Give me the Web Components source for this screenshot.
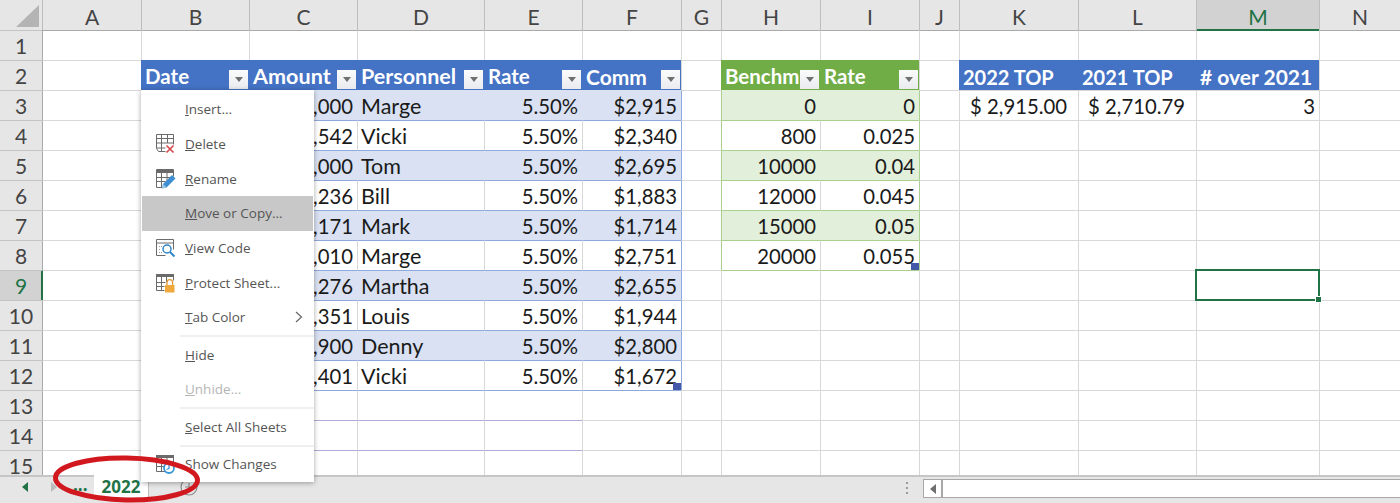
<!DOCTYPE html>
<html lang="en">
<head>
<meta charset="utf-8">
<title>2022</title>
<style>
  html, body { margin: 0; padding: 0; background: #fff; }
  xl-workbook { font-family: Lato, "Liberation Sans", sans-serif; }
  svg { display: block; }
</style>
</head>
<body>
<xl-workbook>
  <xl-sheet></xl-sheet>
  <xl-context-menu>
    <xl-menu-item><u>I</u>nsert...</xl-menu-item>
    <xl-menu-item>
      <svg slot="icon" width="22" height="22" viewBox="0 0 22 22" fill="none"><path d="M2.5 15.500V1.500h17v10M2.500 5.500h17M2.500 10h17M2.500 15h9M7.500 1.500v17M13.500 1.500v8.500M2.500 15.500l2 3h7" stroke="#6a6a6a"/><path d="M12.500 12.500l7 7M19.500 12.500l-7 7" stroke="#d9444a" stroke-width="1.600"/></svg>
      <u>D</u>elete
    </xl-menu-item>
    <xl-menu-item>
      <svg slot="icon" width="22" height="22" viewBox="0 0 22 22" fill="none"><path d="M2.500 19.500V1.500h17v7M2.500 19.500h6M2.500 9.500h15M2.500 13.500h9M7.500 5v14M13 5v8" stroke="#6a6a6a"/><path d="M2 2h18v3H2z" fill="#6a6a6a"/><path d="M8 20.500l1-4.500 9-9 3.500 3.500-9 9z" fill="#3d8fd1"/><path d="M8 20.500l1-4.500 3.500 3.500z" fill="#9cc9ea"/></svg>
      <u>R</u>ename
    </xl-menu-item>
    <xl-menu-item active><u>M</u>ove or Copy...</xl-menu-item>
    <xl-menu-item>
      <svg slot="icon" width="22" height="22" viewBox="0 0 22 22" fill="none"><path d="M2.500 18.500V2.500h17v10M2.500 18.500h9M2.500 6h17" stroke="#6a6a6a"/><path d="M5 9.500h3M5 12.500h2M5 15.500h3" stroke="#9a9a9a" stroke-dasharray="1 1"/><circle cx="13" cy="12" r="4" stroke="#2f86c9" stroke-width="1.500" fill="#fff"/><path d="M16 15l4.500 4.500" stroke="#2f86c9" stroke-width="2"/></svg>
      <u>V</u>iew Code
    </xl-menu-item>
    <xl-menu-item>
      <svg slot="icon" width="22" height="22" viewBox="0 0 22 22" fill="none"><path d="M2.500 18.500V2.500h17v6M2.500 18.500h8M2.500 10.500h9M2.500 14.500h8M7.500 5v13.500M12.500 5v5" stroke="#6a6a6a"/><path d="M2 2h18v3H2z" fill="#6a6a6a"/><path d="M13 13v-2.500a2.800 2.800 0 0 1 5.600 0V13" stroke="#e29a34" stroke-width="1.300"/><rect x="11" y="13" width="9.500" height="7.500" fill="#f0a93c"/></svg>
      <u>P</u>rotect Sheet...
    </xl-menu-item>
    <xl-menu-item more><u>T</u>ab Color</xl-menu-item>
    <xl-menu-sep></xl-menu-sep>
    <xl-menu-item><u>H</u>ide</xl-menu-item>
    <xl-menu-item disabled><u>U</u>nhide...</xl-menu-item>
    <xl-menu-sep></xl-menu-sep>
    <xl-menu-item><u>S</u>elect All Sheets</xl-menu-item>
    <xl-menu-sep></xl-menu-sep>
    <xl-menu-item>
      <svg slot="icon" width="22" height="22" viewBox="0 0 22 22" fill="none"><path d="M2.500 18.500V2.500h17v7M2.500 18.500h9M2.500 9h17M2.500 13.500h9M7.500 2.500v16M13 2.500v6.500" stroke="#6a6a6a"/><path d="M2 2h18v3H2z" fill="#6a6a6a"/><circle cx="15" cy="15" r="5" stroke="#3a97d6" stroke-width="1.800" fill="#fff"/><path d="M15 12v3.500l-2.500 1" stroke="#3a97d6" stroke-width="1.300"/></svg>
      Show Chan<u>g</u>es
    </xl-menu-item>
  </xl-context-menu>
  <xl-tab-bar></xl-tab-bar>
  <xl-callout></xl-callout>
</xl-workbook>

<script>
const COLS = ["A","B","C","D","E","F","G","H","I","J","K","L","M","N"];
const COL_WIDTHS = [99,108,108,127,98,99,40,99,99,40,119,118,123,81];
const SALES = [
  [",000","Marge","$2,915"],[",542","Vicki","$2,340"],[",000","Tom","$2,695"],
  [",236","Bill","$1,883"],[",171","Mark","$1,714"],[",010","Marge","$2,751"],
  [",276","Martha","$2,655"],[",351","Louis","$1,944"],[",900","Denny","$2,800"],
  [",401","Vicki","$1,672"]
];
const BENCH = [["0","0"],["800","0.025"],["10000","0.04"],["12000","0.045"],["15000","0.05"],["20000","0.055"]];
const BLUE_LINE = "#8ea9db";
const GREEN_LINE = "#a9d08e";
const PURPLE_LINE = "#b3a9d6";

const sheetTemplate = document.createElement("template");
sheetTemplate.innerHTML = `
  <style>
    :host { display: block; height: 475px; flex: none; background: #fff; color: #1a1a1a;
      font: 20.3px/1.3 Lato, "Liberation Sans", sans-serif; }
    .grid { display: grid; grid-template-columns: 42px ${COL_WIDTHS.map(w => w + "px").join(" ")};
      grid-auto-rows: 30px; }
    .c { box-sizing: border-box; border-left: 1px solid #d8d8d8; border-top: 1px solid #d8d8d8;
      display: flex; align-items: center; padding: 2px 4px 0 3px; white-space: nowrap; min-width: 0; position: relative; }
    .r { justify-content: flex-end; }
    .name { font-size: 21.5px; }
    .hd { background: #e6e6e6; justify-content: center; color: #444; padding: 0; font-size: 21px; line-height: 1; border-left-color: #bdbdbd; border-top-color: #c4c4c4; }
    .colhd { border-top: 0; padding-top: 2px; }
    .rowhd { border-left: 0; }
    .colhd.sel { box-shadow: inset 0 -1px #217346; }
    .rowhd.sel { box-shadow: inset -1px 0 #217346; }
    .sel { background: #d2d2d2; color: #217346; }
    .corner { padding: 0; border-left: 0; }
    .th { color: #fff; font-weight: 700; border-color: transparent; padding-right: 1px; justify-content: space-between; }
    .th span { min-width: 0; }
    .blue { background: #4472c4; }
    .green { background: #70ad47; }
    .fbtn { flex: none; width: 19px; height: 19px; align-self: flex-end; margin-bottom: 1px; box-sizing: border-box; position: relative;
      background: linear-gradient(#fbfbfb, #e9ebee); display: flex; align-items: center; justify-content: center; }
    .fbtn::after { content: ""; border: 4px solid transparent; border-top: 5px solid #6f6f6f; border-bottom: 0; }
    .grip { position: absolute; right: 0; bottom: 0; width: 8px; height: 7px; background: #4358a8; }
    .cursor { position: absolute; left: -2px; top: -2px; right: -1px; bottom: -1px; border: 2px solid #217346; z-index: 2; }
    .cursor::after { content: ""; position: absolute; right: -4px; bottom: -4px; width: 5px; height: 5px; background: #217346; border: 1px solid #fff; }
  </style>
  <div class="grid"></div>`;

class XlSheet extends HTMLElement {
  connectedCallback() {
    const shadowRoot = this.attachShadow({ mode: "open" });
    shadowRoot.appendChild(sheetTemplate.content.cloneNode(true));
    let html = `<div class="c hd colhd corner"><svg width="42" height="30" viewBox="0 0 42 30"><path d="M16 27h23V5z" fill="#b4b4b4"/></svg></div>`;
    COLS.forEach(l => { html += `<div class="c hd colhd ${l === "M" ? "sel" : ""}">${l}</div>`; });
    for (let row = 1; row <= 15; row++) {
      html += `<div class="c hd rowhd ${row === 9 ? "sel" : ""}">${row}</div>`;
      COLS.forEach(col => { html += this.cell(col, row); });
    }
    shadowRoot.querySelector(".grid").innerHTML = html;
  }

  // top and left edge of a cell: they carry the lines of the cell above and the cell before
  edges(col, row) {
    let top = "", left = "";
    if (row === 1) top = col === "M" ? "#217346" : "#a9a9a9";
    if (row >= 4 && row <= 13 && "BCDEF".includes(col)) top = BLUE_LINE;
    if (row >= 4 && row <= 9 && "HI".includes(col)) top = GREEN_LINE;
    if ((row === 14 || row === 15) && "CDE".includes(col)) top = PURPLE_LINE;
    if (col === "A") left = row === 9 ? "#217346" : "#a9a9a9";
    if (row >= 3 && row <= 12 && "BG".includes(col)) left = BLUE_LINE;
    if (row >= 3 && row <= 8 && "HJ".includes(col)) left = GREEN_LINE;
    if (row >= 3 && row <= 12 && row % 2 === 1 && "CDEF".includes(col)) left = "transparent";
    if (row >= 3 && row <= 8 && row % 2 === 1 && col === "I") left = "transparent";
    if (row === 3 && "BCDEFHI".includes(col)) top = "transparent";
    return (top ? `border-top-color:${top};` : "") + (left ? `border-left-color:${left};` : "");
  }

  cell(col, row) {
    const filter = `<i class="fbtn"></i>`;
    const style = this.edges(col, row);
    if (row === 2) {
      const heads = { B: ["Date", 20.5], C: ["Amount", 21.6], D: ["Personnel", 21.5], E: ["Rate", 20.5], F: ["Comm", 21] };
      if (heads[col]) return `<div class="c th blue"><span style="font-size:${heads[col][1]}px">${heads[col][0]}</span>${filter}</div>`;
      if (col === "H") return `<div class="c th green"><span style="font-size:20.5px">Benchm</span>${filter}</div>`;
      if (col === "I") return `<div class="c th green"><span style="font-size:20.5px">Rate</span>${filter}</div>`;
      const tops = { K: ["2022 TOP", 20], L: ["2021 TOP", 20], M: ["# over 2021", 21] };
      if (tops[col]) return `<div class="c th blue"><span style="font-size:${tops[col][1]}px">${tops[col][0]}</span></div>`;
    }
    if (row >= 3 && row <= 12 && "BCDEF".includes(col)) {
      const d = SALES[row - 3];
      const fill = row % 2 === 1 ? "background:#d9e1f2;" : "";
      const grip = col === "F" && row === 12 ? `<i class="grip"></i>` : "";
      const text = { B: "", C: d[0], D: d[1], E: "5.50%", F: d[2] }[col];
      const kind = col === "D" ? "name" : "r";
      return `<div class="c ${kind}" style="${style}${fill}">${text}${grip}</div>`;
    }
    if (row >= 3 && row <= 8 && (col === "H" || col === "I")) {
      const d = BENCH[row - 3];
      const fill = row % 2 === 1 ? "background:#e2efda;" : "";
      const grip = col === "I" && row === 8 ? `<i class="grip"></i>` : "";
      return `<div class="c r" style="${style}${fill}">${col === "H" ? d[0] : d[1]}${grip}</div>`;
    }
    if (row === 3 && col === "K") return `<div class="c r" style="padding-right:11px">$ 2,915.00</div>`;
    if (row === 3 && col === "L") return `<div class="c r" style="padding-right:11px">$ 2,710.79</div>`;
    if (row === 3 && col === "M") return `<div class="c r">3</div>`;
    if (row === 9 && col === "M") return `<div class="c"><i class="cursor"></i></div>`;
    return `<div class="c" style="${style}"></div>`;
  }
}
customElements.define("xl-sheet", XlSheet);

class XlWorkbook extends HTMLElement {
  connectedCallback() {
    this.attachShadow({ mode: "open" }).innerHTML = `
      <style>
        :host { display: flex; flex-direction: column; position: relative; width: 1400px; height: 503px; overflow: hidden; }
      </style>
      <slot></slot>`;
  }
}
customElements.define("xl-workbook", XlWorkbook);

class XlContextMenu extends HTMLElement {
  connectedCallback() {
    this.attachShadow({ mode: "open" }).innerHTML = `
      <style>
        :host { position: absolute; left: 141px; top: 90px; width: 173px; height: 392px; box-sizing: border-box;
          display: flex; flex-direction: column; padding: 2px 0 0; background: #fff; z-index: 5;
          box-shadow: 0 1px 5px rgba(0,0,0,.35); font: 13.5px "Open Sans", "Liberation Sans", sans-serif; color: #555; }
      </style>
      <slot></slot>`;
  }
}
customElements.define("xl-context-menu", XlContextMenu);

class XlMenuItem extends HTMLElement {
  connectedCallback() {
    const more = this.hasAttribute("more")
      ? `<svg class="more" width="8" height="12" viewBox="0 0 8 12" fill="none"><path d="M1 1l5.500 5L1 11" stroke="#666" stroke-width="1.200"/></svg>` : "";
    this.attachShadow({ mode: "open" }).innerHTML = `
      <style>
        :host { display: flex; align-items: center; height: 34.7px; flex: none; padding-left: 12.5px; padding-right: 11px; white-space: nowrap; }
        :host([active]) { background: #c8c8c8; margin: 0 1px; padding-left: 11.5px; padding-right: 10px; }
        :host([disabled]) { color: #b5b5b5; }
        .icon { width: 22px; height: 22px; margin-right: 9.5px; flex: none; }
        .label { flex: 1; }
        .more { flex: none; }
      </style>
      <span class="icon"><slot name="icon"></slot></span>
      <span class="label"><slot></slot></span>${more}`;
  }
}
customElements.define("xl-menu-item", XlMenuItem);

class XlMenuSep extends HTMLElement {
  connectedCallback() {
    this.attachShadow({ mode: "open" }).innerHTML = `
      <style>:host { display: block; height: 2px; flex: none; margin: .6px 0 0 39px; background: #efefef; }</style>`;
  }
}
customElements.define("xl-menu-sep", XlMenuSep);

class XlTabBar extends HTMLElement {
  connectedCallback() {
    this.attachShadow({ mode: "open" }).innerHTML = `
      <style>
        :host { display: flex; align-items: flex-start; height: 28px; box-sizing: border-box; flex: none; position: relative; z-index: 1;
          border-top: 2px solid #c6c6c6; background: #e6e6e6; font-family: "Open Sans", "Liberation Sans", sans-serif; }
        .nav { flex: none; display: flex; align-items: center; height: 20px; }
        .l { margin-left: 22px; }
        .g { margin-left: 21px; }
        .more { flex: none; width: 37px; height: 20px; padding-left: 16px; box-sizing: border-box; color: #217346; font-weight: 700; font-size: 17px; line-height: 16px; }
        .tab { flex: none; width: 55px; height: 22px; margin-top: -2px; background: #fff; color: #217346; font-weight: 700; font-size: 17px;
          line-height: 24px; text-align: center; border-right: 1px solid #bdbdbd; box-sizing: border-box; }
        .plus { flex: none; margin-left: 31px; margin-top: 1px; }
        .dots { flex: none; margin-left: 707px; margin-top: 5px; }
        .scroll { flex: 1; display: flex; height: 19px; margin: 2px 0 0 14px; box-sizing: border-box;
          border: 1px solid #a8a8a8; border-right: 0; background: #fff; }
        .btn { width: 17px; border-right: 2px solid #a8a8a8; display: flex; align-items: center; justify-content: center; }
        .btn::after { content: ""; border: 5px solid transparent; border-right: 6px solid #6f6f6f; border-left: 0; }
      </style>
      <span class="nav l"><svg width="7" height="10" viewBox="0 0 7 10"><path d="M6 0v10L0 5z" fill="#217346"/></svg></span>
      <span class="nav g"><svg width="7" height="10" viewBox="0 0 7 10"><path d="M1 0v10l6-5z" fill="#bcbcbc"/></svg></span>
      <span class="more">...</span>
      <span class="tab">2022</span>
      <svg class="plus" width="18" height="18" viewBox="0 0 18 18" fill="none"><circle cx="9" cy="9" r="8" stroke="#8a8a8a" stroke-width="1.200"/><path d="M9 5v8M5 9h8" stroke="#8a8a8a" stroke-width="1.200"/></svg>
      <svg class="dots" width="4" height="12" viewBox="0 0 4 12"><path d="M1 0h2v2H1zM1 5h2v2H1zM1 10h2v2H1z" fill="#9a9a9a"/></svg>
      <div class="scroll"><span class="btn"></span></div>`;
  }
}
customElements.define("xl-tab-bar", XlTabBar);

class XlCallout extends HTMLElement {
  connectedCallback() {
    this.attachShadow({ mode: "open" }).innerHTML = `
      <style>:host { position: absolute; left: 48px; top: 448px; width: 160px; height: 55px; z-index: 6; pointer-events: none; }</style>
      <svg width="160" height="55" viewBox="0 0 160 55" fill="none">
        <ellipse cx="78.500" cy="31" rx="71" ry="21" transform="rotate(1 78.500 31)" stroke="#d2181f" stroke-width="5"/>
      </svg>`;
  }
}
customElements.define("xl-callout", XlCallout);
</script>
</body>
</html>
